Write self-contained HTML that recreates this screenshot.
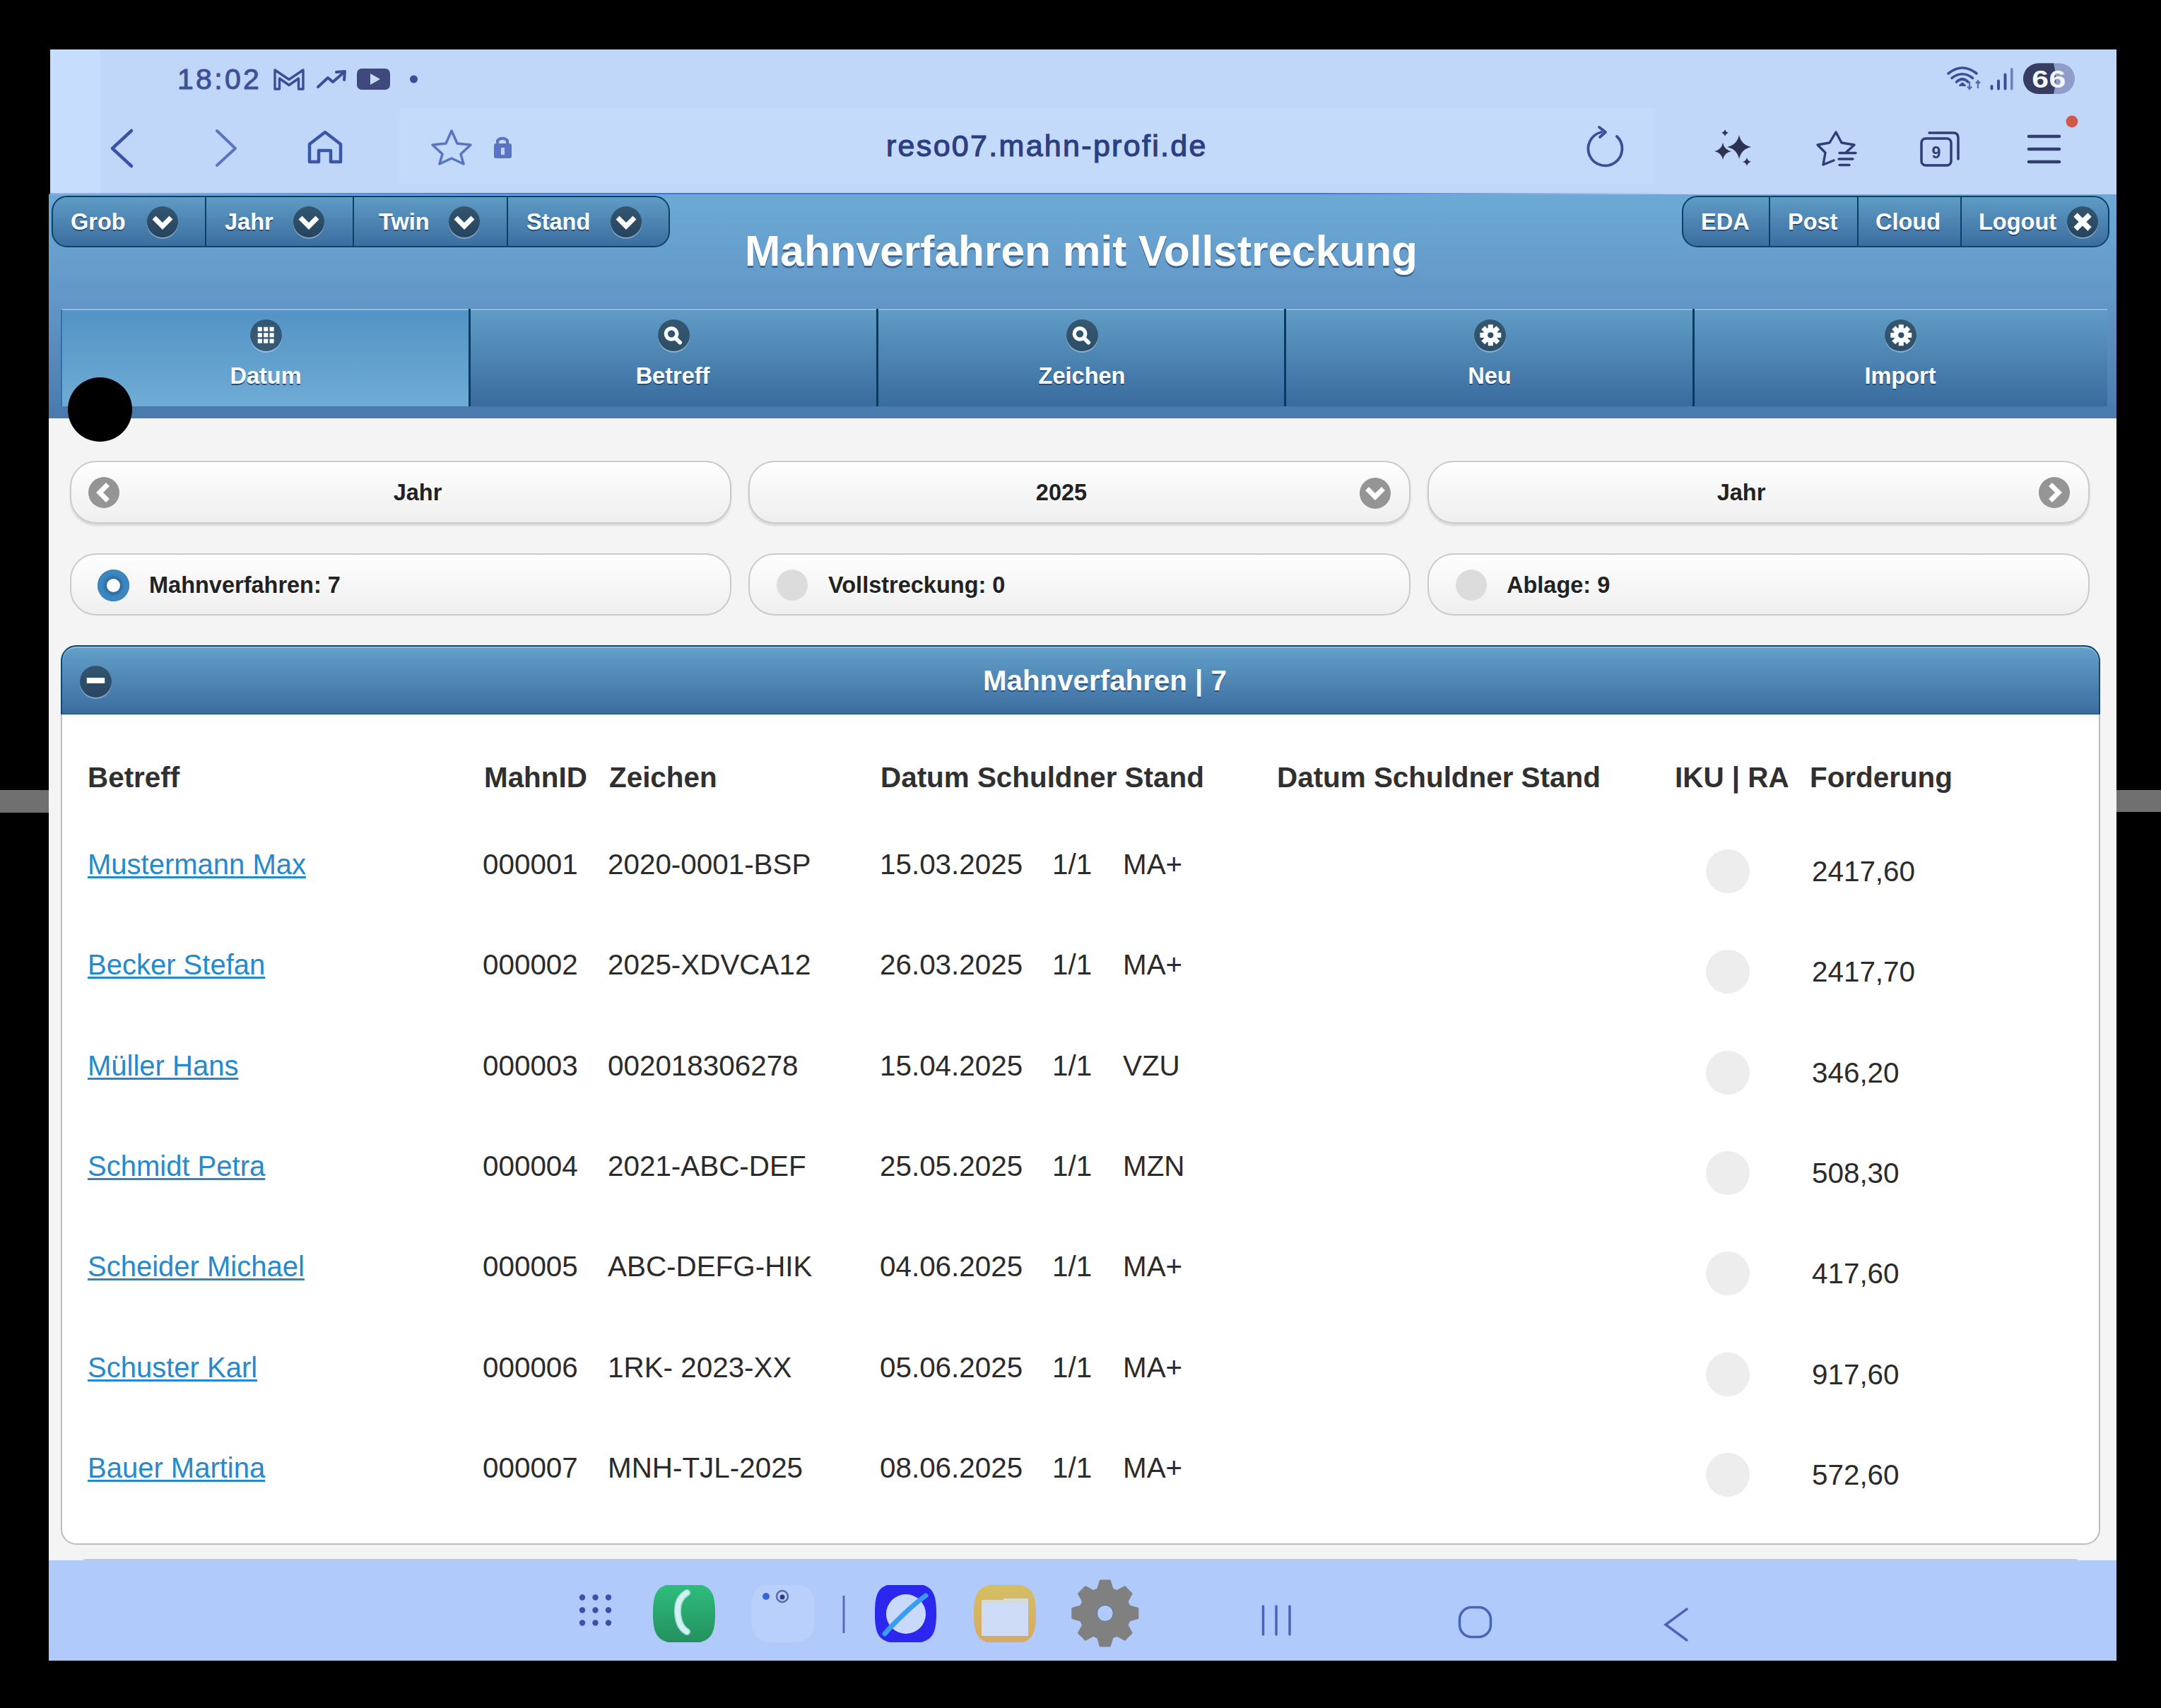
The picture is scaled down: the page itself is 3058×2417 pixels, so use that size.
<!DOCTYPE html>
<html><head><meta charset="utf-8">
<style>
*{margin:0;padding:0;box-sizing:border-box}
html,body{width:3058px;height:2417px;overflow:hidden;background:#000}
body{position:relative;font-family:"Liberation Sans",sans-serif}
.a{position:absolute}
.t{position:absolute;white-space:nowrap;line-height:1}
/* browser chrome */
#chrome{left:71px;top:70px;width:2924px;height:205px;background:#c1d7fa}
#stripe{left:71px;top:70px;width:71px;height:203px;background:#c6ddfd}
#urlbar{left:565px;top:153px;width:1777px;height:107px;background:#c4dafb}
#chromeline{left:69px;top:273px;width:2926px;height:2.5px;background:linear-gradient(to right,rgba(70,120,205,.35) 0px,#4678cd 600px,#4678cd 1800px,rgba(70,120,205,0) 2330px)}
.ic{stroke:#3d4f9c;fill:none;stroke-width:4;stroke-linecap:round;stroke-linejoin:round}
/* header */
#hdr{left:69px;top:275px;width:2926px;height:317px;background:linear-gradient(#6caad6 0px,#6195c5 162px,#4c7db0 300px,#4a7aae 317px)}
#band{left:69px;top:575px;width:2926px;height:17px;background:#4a7aae}
.cg{position:absolute;top:277px;height:73px;border:2px solid #0a4266;border-radius:22px;background:linear-gradient(#5f9cc5,#3b6d9f);overflow:hidden}
.cg .dv{position:absolute;top:0;bottom:0;width:2px;background:#0a4266}
.wt{color:#fff;font-weight:bold;text-shadow:0 2px 0 #1f4f80}
.icb{position:absolute;width:44px;height:44px;border-radius:50%;background:rgba(0,0,0,.42);box-shadow:0 2px 0 rgba(255,255,255,.35)}
.icb svg{position:absolute;left:0;top:0;width:44px;height:44px}
#nav{left:87px;top:437px;width:2895px;height:138px;background:linear-gradient(#5f9cc5,#396b9e);border-top:2px solid #8dbbe0}
#navact{left:86px;top:437px;width:577px;height:138px;background:linear-gradient(#5393c5,#6facd5);border-top:2px solid #8dbbe0;border-left:2px solid #2e72a8}
.ndv{position:absolute;top:437px;height:138px;width:2.5px;background:#0a3a5e}
/* content */
#content{left:69px;top:592px;width:2926px;height:1616px;background:#f4f4f4}
.btn{position:absolute;height:89px;border:2px solid #cbcbcb;border-radius:37px;background:linear-gradient(#fefefe,#efefef)}
.shad{box-shadow:0 3px 3px rgba(0,0,0,.12)}
.dk{color:#222;font-weight:bold;text-shadow:0 2px 0 #fff}
.icg{position:absolute;width:44px;height:44px;border-radius:50%;background:#959595}
.icg svg{position:absolute;left:0;top:0;width:44px;height:44px}
#coll-h{left:86px;top:913px;width:2886px;height:99px;border:2px solid #0f4870;box-shadow:inset 0 2px 0 rgba(255,255,255,.3);border-radius:22px 22px 0 0;background:linear-gradient(#63a0ca,#3b6d9f)}
#coll-c{left:86px;top:1011px;width:2886px;height:1175px;border:2px solid #bdbdbd;border-top:none;border-radius:0 0 22px 22px;background:#fff}
.th{font-size:40.4px;font-weight:bold;color:#303030}
.td{font-size:40.4px;color:#2b2b2b}
.lk{font-size:40px;color:#2489ce;text-decoration:underline;text-decoration-thickness:3px;text-underline-offset:3px}
.circ{position:absolute;width:62px;height:62px;border-radius:50%;background:#ededed}
/* bottom nav */
#bnav{left:69px;top:2208px;width:2926px;height:142px;background:#b0cbfb}
</style></head><body>
<div class="a" style="left:0;top:1118px;width:69px;height:32px;background:#707070"></div>
<div class="a" style="left:2995px;top:1118px;width:63px;height:31px;background:#707070"></div>

<div id="chrome" class="a"></div>
<div id="stripe" class="a"></div>
<div id="urlbar" class="a"></div>
<div id="chromeline" class="a"></div>

<svg class="a" style="left:0;top:0" width="3058" height="300" viewBox="0 0 3058 300">
 <g fill="none" stroke="#3b4e98" stroke-linecap="round" stroke-linejoin="round">
  <!-- gmail M -->
  <path d="M389 126 V99 L409 112.5 L429 99 V126 H422.5 V111 L409 120.5 L395.5 111 V126 Z" stroke-width="3.4"/>
  <!-- trend -->
  <path d="M450 123 L464 110 L471 116 L486 103" stroke-width="4"/>
  <path d="M476 102 L488 101 L487 113" stroke-width="4"/>
  <!-- back / forward -->
  <path d="M186 185 L159 210 L186 235" stroke-width="4.5" stroke="#3b52a6"/>
  <path d="M307 185 L333 210 L307 234" stroke-width="4" stroke="#5b74c0"/>
  <!-- home -->
  <path d="M438 229 V204 L460 187 L482 204 V229 H468 V213 H451 V229 Z" stroke-width="4.5" stroke="#3b55a8"/>
  <!-- star outline -->
  <path d="M639 185 L647 203 L666 205 L652 218 L656 232 L639 224 L622 232 L626 218 L612 205 L631 203 Z" stroke-width="3.5" stroke="#5a74c4"/>
  <!-- reload -->
  <path d="M2288 193 A24 24 0 1 1 2266 187" stroke-width="3.8" stroke="#3b4e98"/>
  <path d="M2263 180 L2272 187 L2264 194" stroke-width="3.8" stroke="#3b4e98"/>
  <!-- star list -->
  <path d="M2595 227 L2580 233 L2583 216 L2572 205 L2589 202 L2598 187 L2606 202 L2624 205 L2613 215" stroke-width="3.4" stroke="#2e3e78"/>
  <path d="M2603 216.5 H2626 M2602 225 H2622 M2603 233.5 H2617" stroke-width="3.4" stroke="#2e3e78"/>
  <!-- tabs -->
  <rect x="2719" y="196" width="42" height="38" rx="6" stroke-width="3.5" stroke="#2e3e78"/>
  <path d="M2730 188 H2764 Q2771 188 2771 195 V225" stroke-width="3.5" stroke="#2e3e78"/>
  <!-- menu -->
  <path d="M2871 193 H2914 M2871 211 H2914 M2871 229 H2914" stroke-width="4.5" stroke="#333d70"/>
 </g>
 <!-- lock -->
 <path d="M704 204 V199 A9 9 0 0 1 718 199 V204" fill="none" stroke="#5a74c4" stroke-width="4"/>
 <rect x="699" y="203" width="25" height="21" rx="3" fill="#5a74c4"/>
 <rect x="709" y="209" width="5" height="10" fill="#bfd5f8"/>
 <!-- youtube -->
 <rect x="505" y="97" width="47" height="30" rx="7" fill="#3e4a7e"/>
 <path d="M524 104 V120 L538 112 Z" fill="#c8d8f6"/>
 <circle cx="585.5" cy="112" r="5.5" fill="#3b4e98"/>
 <!-- sparkle -->
 <g fill="#2c3352">
  <path d="M2461 191 Q2464 205 2478 208 Q2464 211 2461 225 Q2458 211 2444 208 Q2458 205 2461 191 Z"/>
  <path d="M2438 202 Q2440 212 2450 214 Q2440 216 2438 226 Q2436 216 2426 214 Q2436 212 2438 202 Z"/>
  <path d="M2441 183 Q2442 187 2446 188 Q2442 189 2441 193 Q2440 189 2436 188 Q2440 187 2441 183 Z"/>
  <path d="M2472 223 Q2473 228 2478 229 Q2473 230 2472 235 Q2471 230 2466 229 Q2471 228 2472 223 Z"/>
 </g>
 <text x="2740" y="224" font-family="Liberation Sans" font-weight="bold" font-size="23" fill="#2e3e78" text-anchor="middle">9</text>
 <circle cx="2932" cy="172" r="8.5" fill="#d0584a"/>
 <!-- status right -->
 <g fill="#3b4e98">
  <rect x="2816.5" y="120" width="4" height="7.5" rx="2"/>
  <rect x="2826" y="112.5" width="4" height="15" rx="2"/>
  <rect x="2835.5" y="103.5" width="4" height="24" rx="2"/>
  <rect x="2845" y="96" width="3.6" height="31.5" rx="1.8" fill="#6d80c0"/>
 </g>
 <g fill="none" stroke="#3b4e98" stroke-width="3.6" stroke-linecap="round">
  <path d="M2757 104 Q2777 88 2797 104"/>
  <path d="M2762 110.5 Q2777 99 2791.5 110.5"/>
  <path d="M2768.5 116 Q2777 108 2785 116"/>
 </g>
 <path d="M2773 121 L2777 117.5 L2781 121 Z" fill="#3b4e98" stroke="#3b4e98" stroke-width="2" stroke-linejoin="round"/>
 <path d="M2787 115 V125 M2784 122.5 L2787 126 L2790 122.5 M2799 115 V125 M2796 118 L2799 114.5 L2802 118" fill="none" stroke="#5a6cb0" stroke-width="2.2"/>
 <rect x="2863" y="89.5" width="73" height="43.5" rx="21.7" fill="#8e9dca"/>
 <path d="M2884.7 89.5 H2906 Q2912 111 2906 133 H2884.7 A21.7 21.7 0 0 1 2884.7 89.5 Z" fill="#363d60"/>
 <text transform="translate(2899.5 124) scale(1.22 1)" x="0" y="0" font-family="Liberation Sans" font-weight="bold" font-size="35" fill="#f4f6ff" text-anchor="middle" letter-spacing="0.5">66</text>
</svg>
<div class="t" style="left:251px;top:92px;font-size:41px;color:#3d509a;letter-spacing:3.3px;-webkit-text-stroke:1px #3d509a">18:02</div>
<div class="t" style="left:1254px;top:185px;font-size:43px;color:#2c3f82;letter-spacing:2.3px;-webkit-text-stroke:1.2px #2c3f82">reso07.mahn-profi.de</div>


<!-- HEADER -->
<div id="hdr" class="a"></div>
<div id="band" class="a"></div>

<!-- left control group -->
<div class="cg" style="left:73px;width:875px">
 <div class="dv" style="left:215px"></div>
 <div class="dv" style="left:424px"></div>
 <div class="dv" style="left:642px"></div>
</div>
<div class="t wt" style="left:100px;top:298px;font-size:32.5px">Grob</div>
<div class="icb" style="left:208px;top:292px"><svg viewBox="0 0 44 44"><path d="M12.5 18.5 L22 28 L31.5 18.5" fill="none" stroke="#fff" stroke-width="7" stroke-linecap="square"/></svg></div>
<div class="t wt" style="left:318px;top:298px;font-size:32.5px">Jahr</div>
<div class="icb" style="left:415px;top:292px"><svg viewBox="0 0 44 44"><path d="M12.5 18.5 L22 28 L31.5 18.5" fill="none" stroke="#fff" stroke-width="7" stroke-linecap="square"/></svg></div>
<div class="t wt" style="left:536px;top:298px;font-size:32.5px">Twin</div>
<div class="icb" style="left:635px;top:292px"><svg viewBox="0 0 44 44"><path d="M12.5 18.5 L22 28 L31.5 18.5" fill="none" stroke="#fff" stroke-width="7" stroke-linecap="square"/></svg></div>
<div class="t wt" style="left:745px;top:298px;font-size:32.5px">Stand</div>
<div class="icb" style="left:864px;top:292px"><svg viewBox="0 0 44 44"><path d="M12.5 18.5 L22 28 L31.5 18.5" fill="none" stroke="#fff" stroke-width="7" stroke-linecap="square"/></svg></div>

<!-- right control group -->
<div class="cg" style="left:2380px;width:605px">
 <div class="dv" style="left:121px"></div>
 <div class="dv" style="left:246px"></div>
 <div class="dv" style="left:392px"></div>
</div>
<div class="t wt" style="left:2407px;top:298px;font-size:32.5px">EDA</div>
<div class="t wt" style="left:2530px;top:298px;font-size:32.5px">Post</div>
<div class="t wt" style="left:2654px;top:298px;font-size:32.5px">Cloud</div>
<div class="t wt" style="left:2800px;top:298px;font-size:32.5px">Logout</div>
<div class="icb" style="left:2925px;top:292px"><svg viewBox="0 0 44 44"><path d="M12 12 L32 32 M32 12 L12 32" fill="none" stroke="#fff" stroke-width="7.5"/></svg></div>

<div class="t wt" style="left:1054px;top:325px;font-size:60.4px;text-shadow:0 3px 0 #3b6590">Mahnverfahren mit Vollstreckung</div>

<!-- navbar -->
<div id="nav" class="a"></div>
<div id="navact" class="a"></div>
<div class="ndv" style="left:663px"></div>
<div class="ndv" style="left:1240px"></div>
<div class="ndv" style="left:1817px"></div>
<div class="ndv" style="left:2395px"></div>
<div class="icb" style="left:354px;top:452px;width:45px;height:45px"><svg viewBox="0 0 45 45"><g fill="#fff"><rect x="11.0" y="11.0" width="6.2" height="6.2"/><rect x="11.0" y="19.6" width="6.2" height="6.2"/><rect x="11.0" y="28.2" width="6.2" height="6.2"/><rect x="19.6" y="11.0" width="6.2" height="6.2"/><rect x="19.6" y="19.6" width="6.2" height="6.2"/><rect x="19.6" y="28.2" width="6.2" height="6.2"/><rect x="28.2" y="11.0" width="6.2" height="6.2"/><rect x="28.2" y="19.6" width="6.2" height="6.2"/><rect x="28.2" y="28.2" width="6.2" height="6.2"/></g></svg></div>
<div class="t wt" style="left:176px;width:400px;text-align:center;top:516px;font-size:32.5px">Datum</div>
<div class="icb" style="left:931px;top:452px;width:45px;height:45px"><svg viewBox="0 0 45 45"><circle cx="19.5" cy="20.8" r="8" fill="none" stroke="#fff" stroke-width="5.4"/><path d="M25.5 27 L32 33.5" stroke="#fff" stroke-width="5.8" stroke-linecap="round"/></svg></div>
<div class="t wt" style="left:752px;width:400px;text-align:center;top:516px;font-size:32.5px">Betreff</div>
<div class="icb" style="left:1509px;top:452px;width:45px;height:45px"><svg viewBox="0 0 45 45"><circle cx="19.5" cy="20.8" r="8" fill="none" stroke="#fff" stroke-width="5.4"/><path d="M25.5 27 L32 33.5" stroke="#fff" stroke-width="5.8" stroke-linecap="round"/></svg></div>
<div class="t wt" style="left:1331px;width:400px;text-align:center;top:516px;font-size:32.5px">Zeichen</div>
<div class="icb" style="left:2086px;top:452px;width:45px;height:45px"><svg viewBox="0 0 45 45"><g transform="translate(23.8 22.8)"><g fill="#fff"><rect x="-3.6" y="-15.3" width="7.2" height="30.6" transform="rotate(0)"/><rect x="-3.6" y="-15.3" width="7.2" height="30.6" transform="rotate(45)"/><rect x="-3.6" y="-15.3" width="7.2" height="30.6" transform="rotate(90)"/><rect x="-3.6" y="-15.3" width="7.2" height="30.6" transform="rotate(135)"/><circle r="10.8"/></g><circle r="4.2" fill="#2e5070"/></g></svg></div>
<div class="t wt" style="left:1908px;width:400px;text-align:center;top:516px;font-size:32.5px">Neu</div>
<div class="icb" style="left:2667px;top:452px;width:45px;height:45px"><svg viewBox="0 0 45 45"><g transform="translate(23.8 22.8)"><g fill="#fff"><rect x="-3.6" y="-15.3" width="7.2" height="30.6" transform="rotate(0)"/><rect x="-3.6" y="-15.3" width="7.2" height="30.6" transform="rotate(45)"/><rect x="-3.6" y="-15.3" width="7.2" height="30.6" transform="rotate(90)"/><rect x="-3.6" y="-15.3" width="7.2" height="30.6" transform="rotate(135)"/><circle r="10.8"/></g><circle r="4.2" fill="#2e5070"/></g></svg></div>
<div class="t wt" style="left:2489px;width:400px;text-align:center;top:516px;font-size:32.5px">Import</div>


<!-- CONTENT -->
<div id="content" class="a"></div>

<!-- row 1 -->
<div class="btn shad" style="left:99px;top:652px;width:936px"></div>
<div class="btn shad" style="left:1059px;top:652px;width:937px"></div>
<div class="btn shad" style="left:2020px;top:652px;width:937px"></div>
<div class="icg" style="left:125px;top:675px"><svg viewBox="0 0 44 44"><path d="M25 13 L16 22 L25 31" fill="none" stroke="#fff" stroke-width="7" stroke-linecap="square"/></svg></div>
<div class="icg" style="left:1924px;top:676px"><svg viewBox="0 0 44 44"><path d="M13 18 L22 27 L31 18" fill="none" stroke="#fff" stroke-width="7" stroke-linecap="square"/></svg></div>
<div class="icg" style="left:2885px;top:675px"><svg viewBox="0 0 44 44"><path d="M19 13 L28 22 L19 31" fill="none" stroke="#fff" stroke-width="7" stroke-linecap="square"/></svg></div>
<div class="t dk" style="left:391px;width:400px;text-align:center;top:681px;font-size:32.5px">Jahr</div>
<div class="t dk" style="left:1302px;width:400px;text-align:center;top:681px;font-size:32.5px">2025</div>
<div class="t dk" style="left:2264px;width:400px;text-align:center;top:681px;font-size:32.5px">Jahr</div>
<!-- row 2 -->
<div class="btn" style="left:99px;top:783px;width:936px;height:88px"></div>
<div class="btn" style="left:1059px;top:783px;width:937px;height:88px"></div>
<div class="btn" style="left:2020px;top:783px;width:937px;height:88px"></div>
<div class="a" style="left:138px;top:806px;width:45px;height:45px;border-radius:50%;background:#3c87c0;box-shadow:inset 0 0 0 1px #3a82bb"></div>
<div class="a" style="left:151px;top:819px;width:19px;height:19px;border-radius:50%;background:#fff;box-shadow:0 0 4px 3px rgba(20,60,100,.45)"></div>
<div class="a" style="left:1099px;top:806px;width:44px;height:44px;border-radius:50%;background:#dcdcdc"></div>
<div class="a" style="left:2060px;top:806px;width:44px;height:44px;border-radius:50%;background:#dcdcdc"></div>
<div class="t dk" style="left:211px;top:812px;font-size:32.5px">Mahnverfahren: 7</div>
<div class="t dk" style="left:1172px;top:812px;font-size:32.5px">Vollstreckung: 0</div>
<div class="t dk" style="left:2132px;top:812px;font-size:32.5px">Ablage: 9</div>

<!-- collapsible -->
<div id="coll-h" class="a"></div>
<div class="icb" style="left:113px;top:942px;width:45px;height:45px"><svg viewBox="0 0 45 45"><rect x="10" y="17.5" width="26" height="8" fill="#fff"/></svg></div>
<div class="t wt" style="left:1391px;top:944px;font-size:40.3px">Mahnverfahren | 7</div>
<div id="coll-c" class="a"></div>
<div class="t th" style="left:124px;top:1080px">Betreff</div>
<div class="t th" style="left:685px;top:1080px">MahnID</div>
<div class="t th" style="left:862px;top:1080px">Zeichen</div>
<div class="t th" style="left:1246px;top:1080px">Datum Schuldner Stand</div>
<div class="t th" style="left:1807px;top:1080px">Datum Schuldner Stand</div>
<div class="t th" style="left:2370px;top:1080px">IKU | RA</div>
<div class="t th" style="left:2561px;top:1080px">Forderung</div>
<div class="t lk" style="left:124px;top:1203px">Mustermann Max</div>
<div class="t td" style="left:683px;top:1203px">000001</div>
<div class="t td" style="left:860px;top:1203px">2020-0001-BSP</div>
<div class="t td" style="left:1245px;top:1203px">15.03.2025</div>
<div class="t td" style="left:1489px;top:1203px">1/1</div>
<div class="t td" style="left:1589px;top:1203px">MA+</div>
<div class="circ" style="left:2414px;top:1202px"></div>
<div class="t td" style="left:2564px;top:1213px">2417,60</div>
<div class="t lk" style="left:124px;top:1345px">Becker Stefan</div>
<div class="t td" style="left:683px;top:1345px">000002</div>
<div class="t td" style="left:860px;top:1345px">2025-XDVCA12</div>
<div class="t td" style="left:1245px;top:1345px">26.03.2025</div>
<div class="t td" style="left:1489px;top:1345px">1/1</div>
<div class="t td" style="left:1589px;top:1345px">MA+</div>
<div class="circ" style="left:2414px;top:1344px"></div>
<div class="t td" style="left:2564px;top:1355px">2417,70</div>
<div class="t lk" style="left:124px;top:1488px">Müller Hans</div>
<div class="t td" style="left:683px;top:1488px">000003</div>
<div class="t td" style="left:860px;top:1488px">002018306278</div>
<div class="t td" style="left:1245px;top:1488px">15.04.2025</div>
<div class="t td" style="left:1489px;top:1488px">1/1</div>
<div class="t td" style="left:1589px;top:1488px">VZU</div>
<div class="circ" style="left:2414px;top:1487px"></div>
<div class="t td" style="left:2564px;top:1498px">346,20</div>
<div class="t lk" style="left:124px;top:1630px">Schmidt Petra</div>
<div class="t td" style="left:683px;top:1630px">000004</div>
<div class="t td" style="left:860px;top:1630px">2021-ABC-DEF</div>
<div class="t td" style="left:1245px;top:1630px">25.05.2025</div>
<div class="t td" style="left:1489px;top:1630px">1/1</div>
<div class="t td" style="left:1589px;top:1630px">MZN</div>
<div class="circ" style="left:2414px;top:1629px"></div>
<div class="t td" style="left:2564px;top:1640px">508,30</div>
<div class="t lk" style="left:124px;top:1772px">Scheider Michael</div>
<div class="t td" style="left:683px;top:1772px">000005</div>
<div class="t td" style="left:860px;top:1772px">ABC-DEFG-HIK</div>
<div class="t td" style="left:1245px;top:1772px">04.06.2025</div>
<div class="t td" style="left:1489px;top:1772px">1/1</div>
<div class="t td" style="left:1589px;top:1772px">MA+</div>
<div class="circ" style="left:2414px;top:1771px"></div>
<div class="t td" style="left:2564px;top:1782px">417,60</div>
<div class="t lk" style="left:124px;top:1915px">Schuster Karl</div>
<div class="t td" style="left:683px;top:1915px">000006</div>
<div class="t td" style="left:860px;top:1915px">1RK- 2023-XX</div>
<div class="t td" style="left:1245px;top:1915px">05.06.2025</div>
<div class="t td" style="left:1489px;top:1915px">1/1</div>
<div class="t td" style="left:1589px;top:1915px">MA+</div>
<div class="circ" style="left:2414px;top:1914px"></div>
<div class="t td" style="left:2564px;top:1925px">917,60</div>
<div class="t lk" style="left:124px;top:2057px">Bauer Martina</div>
<div class="t td" style="left:683px;top:2057px">000007</div>
<div class="t td" style="left:860px;top:2057px">MNH-TJL-2025</div>
<div class="t td" style="left:1245px;top:2057px">08.06.2025</div>
<div class="t td" style="left:1489px;top:2057px">1/1</div>
<div class="t td" style="left:1589px;top:2057px">MA+</div>
<div class="circ" style="left:2414px;top:2056px"></div>
<div class="t td" style="left:2564px;top:2067px">572,60</div>
<div class="a" style="left:96px;top:534px;width:91px;height:91px;border-radius:50%;background:#000"></div>


<!-- BOTTOM NAV -->
<div class="a" style="left:112px;top:2206px;width:2834px;height:10px;border-top:2px solid #c9c9c9;border-radius:16px 16px 0 0;background:#b0cbfb"></div>
<div id="bnav" class="a"></div>

<svg class="a" style="left:0;top:2200px" width="3058" height="160" viewBox="0 2200 3058 160">
 <g fill="#3d4fa8"><circle cx="824.0" cy="2260.5" r="4.2"/><circle cx="824.0" cy="2278.5" r="4.2"/><circle cx="824.0" cy="2296.5" r="4.2"/><circle cx="842.5" cy="2260.5" r="4.2"/><circle cx="842.5" cy="2278.5" r="4.2"/><circle cx="842.5" cy="2296.5" r="4.2"/><circle cx="861.0" cy="2260.5" r="4.2"/><circle cx="861.0" cy="2278.5" r="4.2"/><circle cx="861.0" cy="2296.5" r="4.2"/></g>
 <!-- phone -->
 <defs>
  <linearGradient id="gph" x1="0" y1="0" x2="0" y2="1"><stop offset="0" stop-color="#2fbf7e"/><stop offset="1" stop-color="#238f5c"/></linearGradient>
  <linearGradient id="gfl" x1="0" y1="0" x2="0" y2="1"><stop offset="0" stop-color="#d4bf62"/><stop offset="1" stop-color="#d9a862"/></linearGradient>
  <clipPath id="cl"><rect x="0" y="2243" width="3058" height="81"/></clipPath>
 </defs>
 <g clip-path="url(#cl)">
 <path d="M968 2240 C1005 2240 1012 2250 1012 2283 C1012 2316 1005 2326 968 2326 C931 2326 924 2316 924 2283 C924 2250 931 2240 968 2240 Z" fill="url(#gph)"/>
 <path d="M1108 2240 C1148 2240 1154 2250 1154 2283 C1154 2316 1148 2326 1108 2326 C1068 2326 1062 2316 1062 2283 C1062 2250 1068 2240 1108 2240 Z" fill="#b9d0fc" stroke="#b6c9f0" stroke-width="1.5"/>
 <path d="M1281 2240 C1318 2240 1325 2250 1325 2283 C1325 2316 1318 2326 1281 2326 C1244 2326 1238 2316 1238 2283 C1238 2250 1244 2240 1281 2240 Z" fill="#2b27ef"/>
 <path d="M1422 2241 C1459 2241 1466 2251 1466 2284 C1466 2317 1459 2327 1422 2327 C1385 2327 1378 2317 1378 2284 C1378 2251 1385 2241 1422 2241 Z" fill="url(#gfl)"/>
 </g>
 <path d="M972 2254 Q958 2262 959 2282 Q960 2302 972 2309" fill="none" stroke="#9fd6dc" stroke-width="10" stroke-linecap="round"/><path d="M972 2254 Q958 2262 959 2282 Q960 2302 972 2309" fill="none" stroke="#d2f2f2" stroke-width="7" stroke-linecap="round"/>
 <circle cx="1084" cy="2259" r="5" fill="#3a64dc"/>
 <circle cx="1107" cy="2259" r="8" fill="none" stroke="#5a6aa8" stroke-width="2.5"/>
 <circle cx="1107" cy="2260" r="3.5" fill="#2a3a80"/>
 <rect x="1192.5" y="2258" width="3" height="53" fill="#5a6cb8"/>
 <circle cx="1282" cy="2284" r="28" fill="#c9d9fb"/>
 <path d="M1252 2312 C1262 2300 1290 2272 1310 2258" fill="none" stroke="#3a9cf0" stroke-width="7" stroke-linecap="round"/>
 <path d="M1389 2266 H1417 L1421 2262 H1455 V2315 H1389 Z" fill="#cfdcf8"/>
 <rect x="1389" y="2264" width="66" height="4" fill="#d8dcc8"/>
 <path d="M1553.2 2248.6 L1556.8 2236.5 L1570.8 2236.5 L1574.4 2248.6 L1580.6 2251.2 L1591.7 2245.2 L1601.6 2255.1 L1595.6 2266.2 L1598.2 2272.4 L1610.3 2276.0 L1610.3 2290.0 L1598.2 2293.6 L1595.6 2299.8 L1601.6 2310.9 L1591.7 2320.8 L1580.6 2314.8 L1574.4 2317.4 L1570.8 2329.5 L1556.8 2329.5 L1553.2 2317.4 L1547.0 2314.8 L1535.9 2320.8 L1526.0 2310.9 L1532.0 2299.8 L1529.4 2293.6 L1517.3 2290.0 L1517.3 2276.0 L1529.4 2272.4 L1532.0 2266.2 L1526.0 2255.1 L1535.9 2245.2 L1547.0 2251.2 Z" fill="#808080" stroke="#808080" stroke-width="2" stroke-linejoin="round"/>
 <circle cx="1563.8" cy="2283" r="11.5" fill="#b0cbfb" stroke="#5a6a88" stroke-width="1"/>
 <g fill="none" stroke="#4a64b8" stroke-width="3.5" stroke-linecap="round">
  <path d="M1787.5 2273 V2313 M1806 2273 V2313 M1825 2273 V2313"/>
  <rect x="2065.5" y="2274.5" width="44" height="42" rx="17"/>
  <path d="M2387 2277 L2357 2299 L2387 2321"/>
 </g>
</svg>


</body></html>
